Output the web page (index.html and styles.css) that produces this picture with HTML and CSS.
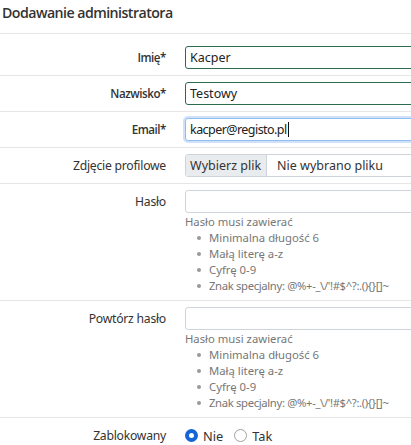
FILE: index.html
```html
<!DOCTYPE html>
<html lang="pl">
<head>
<meta charset="utf-8">
<title>Dodawanie administratora</title>
<link rel="stylesheet" href="styles.css">
</head>
<body>
<div class="page">
  <h1 class="title">Dodawanie administratora</h1>
  <form class="form">
    <div class="row first">
      <label class="lbl req" for="f-name">Imię*</label>
      <div class="field"><input id="f-name" class="input valid" type="text" value="Kacper"></div>
    </div>
    <div class="row">
      <label class="lbl req" for="f-surname">Nazwisko*</label>
      <div class="field"><input id="f-surname" class="input valid" type="text" value="Testowy"></div>
    </div>
    <div class="row">
      <label class="lbl req">Email*</label>
      <div class="field"><div class="input focus">kacper@registo.pl<span class="caret"></span></div></div>
    </div>
    <div class="row">
      <label class="lbl">Zdjęcie profilowe</label>
      <div class="field">
        <div class="file"><span class="file-btn">Wybierz plik</span><span class="file-name">Nie wybrano pliku</span></div>
      </div>
    </div>
    <div class="row">
      <label class="lbl" for="f-pass">Hasło</label>
      <div class="field">
        <input id="f-pass" class="input" type="password">
        <div class="help">
          <div>Hasło musi zawierać</div>
          <ul class="rules">
            <li>Minimalna długość 6</li>
            <li>Małą literę a-z</li>
            <li>Cyfrę 0-9</li>
            <li>Znak specjalny: @%+-_\/'!#$^?:.(){}[]~</li>
          </ul>
        </div>
      </div>
    </div>
    <div class="row">
      <label class="lbl" for="f-pass2">Powtórz hasło</label>
      <div class="field">
        <input id="f-pass2" class="input" type="password">
        <div class="help">
          <div>Hasło musi zawierać</div>
          <ul class="rules">
            <li>Minimalna długość 6</li>
            <li>Małą literę a-z</li>
            <li>Cyfrę 0-9</li>
            <li>Znak specjalny: @%+-_\/'!#$^?:.(){}[]~</li>
          </ul>
        </div>
      </div>
    </div>
    <div class="row">
      <span class="lbl">Zablokowany</span>
      <div class="field radios">
        <label class="radio"><span class="dot on"></span>Nie</label>
        <label class="radio"><span class="dot"></span>Tak</label>
      </div>
    </div>
  </form>
</div>
</body>
</html>
```
FILE: styles.css
```css
html, body {
  margin: 0;
  padding: 0;
  overflow: hidden;
  background: #fff;
}
body {
  font-family: "Noto Sans", "Open Sans", sans-serif;
  font-size: 12.5px;
  color: #333;
}
.page {
  width: 470px;
}
.title {
  margin: 0;
  height: 34px;
  padding: 3px 0 0 2px;
  box-sizing: border-box;
  font-family: "Open Sans", "Noto Sans", sans-serif;
  font-size: 14.2px;
  font-weight: 600;
  letter-spacing: -0.55px;
  line-height: 19px;
  color: #333;
  border-bottom: 1px solid #e6e6e6;
}
.form {
  margin: 0;
}
.row {
  display: grid;
  grid-template-columns: 166px 1fr;
  column-gap: 19px;
  padding: 6px 0;
  border-bottom: 1px solid #e6e6e6;
}
.row.first {
  padding-top: 12px;
}
.lbl {
  text-align: right;
  font-size: 12.2px;
  letter-spacing: -0.25px;
  line-height: 23px;
  height: 23px;
  white-space: nowrap;
  color: #333;
}
.lbl.req {
  font-family: "Open Sans", "Noto Sans", sans-serif;
  font-size: 11.6px;
  font-weight: 600;
  letter-spacing: -0.45px;
}
.field {
  min-width: 0;
}
.input {
  display: block;
  box-sizing: border-box;
  width: 100%;
  height: 23px;
  margin: 0;
  padding: 0 4px;
  border: 1px solid #ced4da;
  border-radius: 3px;
  font: inherit;
  color: #222;
  line-height: 21px;
  background: #fff;
  outline: none;
}
.input.valid {
  border-color: #2d6b4e;
}
.input.focus {
  border-color: #8fbdf0;
  box-shadow: 0 0 0 2px rgba(120, 170, 235, 0.35);
  letter-spacing: -0.55px;
}
.caret {
  display: inline-block;
  width: 1px;
  height: 15px;
  margin-left: 1px;
  background: #111;
  vertical-align: -3px;
}
.file {
  display: flex;
  height: 23px;
  box-sizing: border-box;
  border: 1px solid #ced4da;
  border-radius: 3px;
  overflow: hidden;
  line-height: 21px;
  white-space: nowrap;
}
.file-btn {
  padding: 0 5px 0 4px;
  background: #e9ecef;
  border-right: 1px solid #ced4da;
  color: #333;
}
.file-name {
  padding-left: 10px;
  color: #333;
}
.help {
  margin-top: 1px;
  font-size: 11.3px;
  line-height: 16px;
  color: #777;
}
.rules {
  margin: 0;
  padding-left: 24px;
  list-style: none;
}
.rules li {
  position: relative;
  white-space: nowrap;
}
.rules li:last-child {
  letter-spacing: -0.35px;
}
.rules li::before {
  content: "";
  position: absolute;
  left: -12px;
  top: 6px;
  width: 4px;
  height: 4px;
  border-radius: 50%;
  background: #999;
}
.radios {
  display: flex;
  align-items: center;
  gap: 11px;
  height: 23px;
}
.radio {
  display: flex;
  align-items: center;
  gap: 5px;
  font-size: 12.8px;
}
.dot {
  width: 13px;
  height: 13px;
  box-sizing: border-box;
  border-radius: 50%;
  border: 1px solid #a0a0a0;
  background: #fff;
}
.dot.on {
  border: 4px solid #1565d8;
}
```
